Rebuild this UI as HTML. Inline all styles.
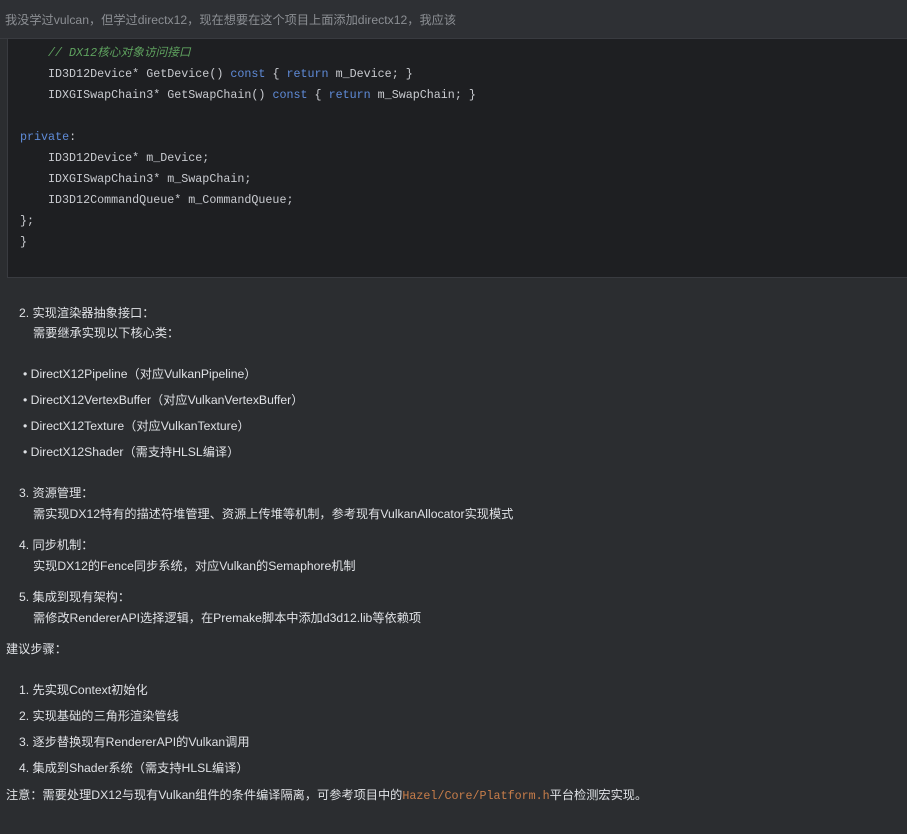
<!DOCTYPE html>
<html><head><meta charset="utf-8"><style>
html,body{margin:0;padding:0;background:#2b2d30;width:907px;height:834px;overflow:hidden}
body{position:relative;font-family:"Liberation Sans","Noto Sans CJK SC",sans-serif;font-size:12.2px;color:#dfe1e5}
.hdr{position:absolute;left:0;top:0;width:907px;height:38px;background:#2e3034;border-bottom:1px solid #393b40}
.hdr span{position:absolute;left:5px;top:10px;color:#8c8f94;font-size:12.2px}
.code{position:absolute;left:7px;top:39px;width:900px;height:238px;background:#1e1f22;border-left:1px solid #393b40;border-bottom:1px solid #393b40}
.c{position:absolute;font-family:"Liberation Mono","Noto Sans CJK SC",monospace;font-size:11.7px;color:#c9cbd0;white-space:pre;line-height:18px}
.k{color:#5f8bd8}.cm{color:#5fa35f;font-style:italic}
.t{position:absolute;white-space:nowrap;line-height:18px}
.or{color:#c77d4a;font-family:"Liberation Mono",monospace;font-size:11.7px}
</style></head><body>
<div class="hdr"><span>我没学过vulcan，但学过directx12，现在想要在这个项目上面添加directx12，我应该</span></div>
<div class="code"></div>
<div class="c cm" style="left:48px;top:44px">// DX12核心对象访问接口</div>
<div class="c" style="left:48px;top:65px">ID3D12Device* GetDevice() <span class="k">const</span> { <span class="k">return</span> m_Device; }</div>
<div class="c" style="left:48px;top:86px">IDXGISwapChain3* GetSwapChain() <span class="k">const</span> { <span class="k">return</span> m_SwapChain; }</div>
<div class="c" style="left:20px;top:128px"><span class="k">private</span>:</div>
<div class="c" style="left:48px;top:149px">ID3D12Device* m_Device;</div>
<div class="c" style="left:48px;top:170px">IDXGISwapChain3* m_SwapChain;</div>
<div class="c" style="left:48px;top:191px">ID3D12CommandQueue* m_CommandQueue;</div>
<div class="c" style="left:20px;top:212px">};</div>
<div class="c" style="left:20px;top:233px">}</div>

<div class="t" style="left:19px;top:304px">2. 实现渲染器抽象接口：</div>
<div class="t" style="left:33px;top:324px">需要继承实现以下核心类：</div>
<div class="t" style="left:23px;top:365px">• DirectX12Pipeline（对应VulkanPipeline）</div>
<div class="t" style="left:23px;top:391px">• DirectX12VertexBuffer（对应VulkanVertexBuffer）</div>
<div class="t" style="left:23px;top:417px">• DirectX12Texture（对应VulkanTexture）</div>
<div class="t" style="left:23px;top:443px">• DirectX12Shader（需支持HLSL编译）</div>
<div class="t" style="left:19px;top:484px">3. 资源管理：</div>
<div class="t" style="left:33px;top:505px">需实现DX12特有的描述符堆管理、资源上传堆等机制，参考现有VulkanAllocator实现模式</div>
<div class="t" style="left:19px;top:536px">4. 同步机制：</div>
<div class="t" style="left:33px;top:557px">实现DX12的Fence同步系统，对应Vulkan的Semaphore机制</div>
<div class="t" style="left:19px;top:588px">5. 集成到现有架构：</div>
<div class="t" style="left:33px;top:609px">需修改RendererAPI选择逻辑，在Premake脚本中添加d3d12.lib等依赖项</div>
<div class="t" style="left:6px;top:640px">建议步骤：</div>
<div class="t" style="left:19px;top:681px">1. 先实现Context初始化</div>
<div class="t" style="left:19px;top:707px">2. 实现基础的三角形渲染管线</div>
<div class="t" style="left:19px;top:733px">3. 逐步替换现有RendererAPI的Vulkan调用</div>
<div class="t" style="left:19px;top:759px">4. 集成到Shader系统（需支持HLSL编译）</div>
<div class="t" style="left:6px;top:786px">注意：需要处理DX12与现有Vulkan组件的条件编译隔离，可参考项目中的<span class="or">Hazel/Core/Platform.h</span>平台检测宏实现。</div>
</body></html>
